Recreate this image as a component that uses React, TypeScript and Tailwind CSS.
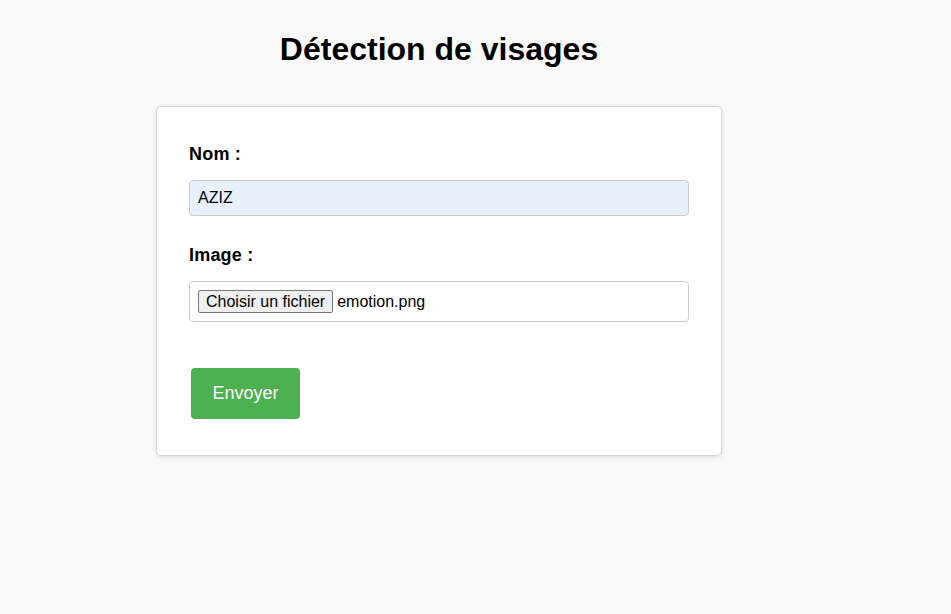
export default function App() {
  return (
    <div className="min-h-screen bg-[#f9f9f9] font-['Liberation_Sans',Arial,sans-serif] text-black">
      <div className="ml-[156px] w-[566px] pt-[31px]">
        <h1 className="text-center text-[32px] font-bold leading-[37px] text-black">
          Détection de visages
        </h1>

        <form
          className="mt-[38px] rounded-[5px] border border-[#d4d4d4] bg-white px-8 pt-[37px] pb-9 shadow-[0_1px_4px_rgba(0,0,0,0.12)]"
          onSubmit={(e) => e.preventDefault()}
        >
          <label className="block text-[18px] font-bold leading-[21px] tracking-[0.2px]">Nom :</label>
          <input
            type="text"
            defaultValue="AZIZ"
            className="mt-[15px] block h-9 w-full rounded-[4px] border border-[#cccccc] bg-[#e8f0fe] px-2 text-[16px] text-black outline-none"
          />

          <label className="mt-[29px] block text-[18px] font-bold leading-[21px] tracking-[0.2px]">Image :</label>
          <div className="mt-[15px] flex h-[41px] w-full items-center gap-1 rounded-[4px] border border-[#cccccc] bg-white px-2">
            <button
              type="button"
              className="h-[23px] rounded-[2px] border border-[#767676] bg-[#efefef] px-[7px] text-[16px] leading-[19px] text-black"
            >
              Choisir un fichier
            </button>
            <span className="text-[16px] text-black">emotion.png</span>
          </div>

          <button
            type="submit"
            className="mt-[46px] ml-0.5 h-[51px] w-[109px] rounded-[4px] bg-[#4caf50] text-[18px] text-white"
          >
            Envoyer
          </button>
        </form>
      </div>
    </div>
  );
}
